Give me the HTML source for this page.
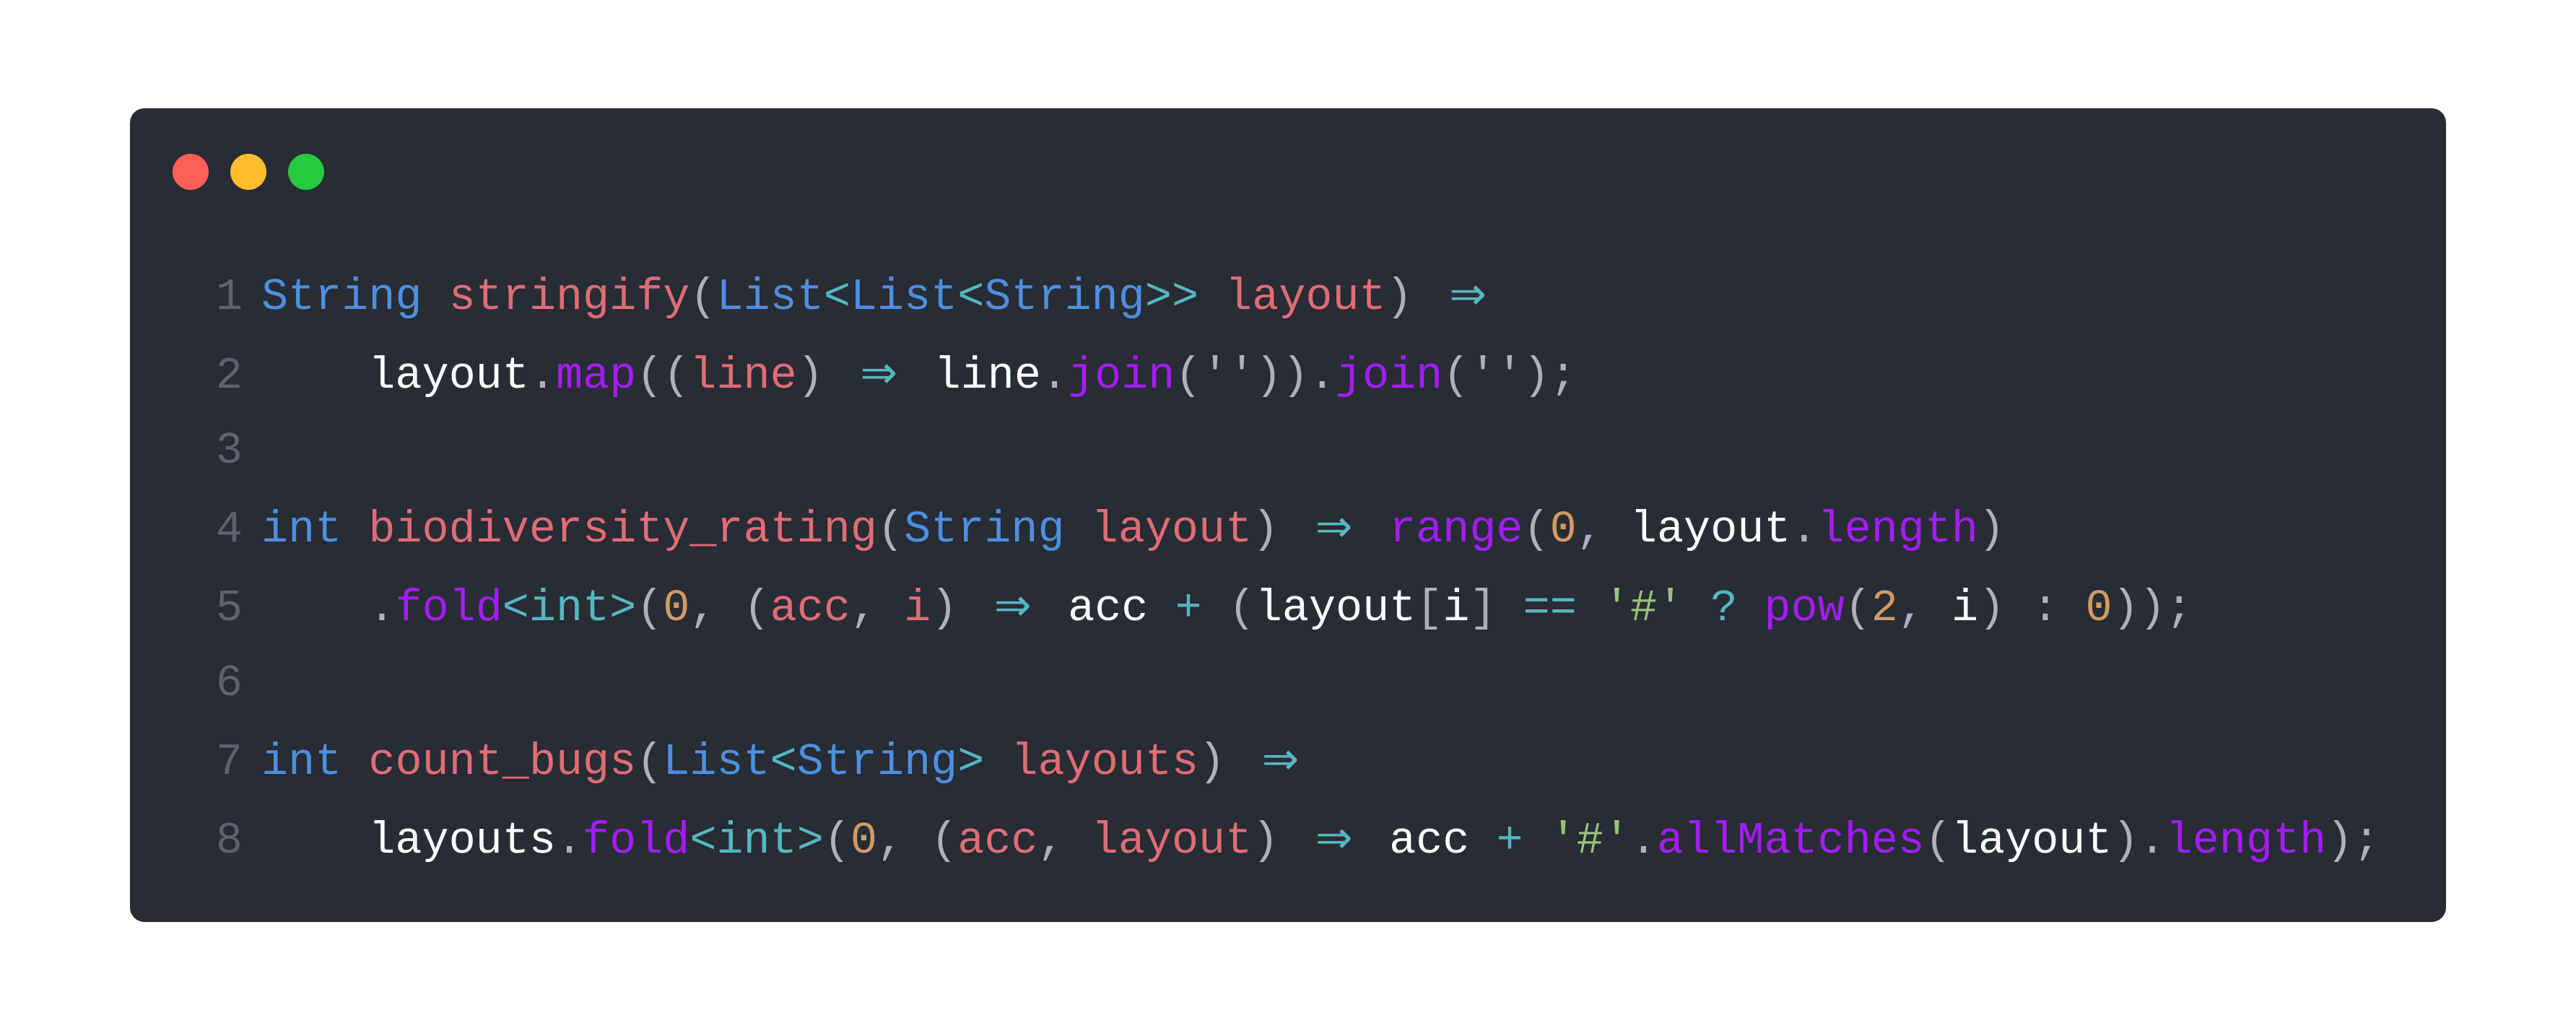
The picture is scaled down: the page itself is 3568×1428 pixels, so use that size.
<!DOCTYPE html>
<html><head><meta charset="utf-8"><style>
html,body{margin:0;padding:0;background:#fff;width:3568px;height:1428px;overflow:hidden}
.win{position:absolute;left:180px;top:150px;width:3208px;height:1127px;background:#282c34;border-radius:20px}
.dot{position:absolute;top:63px;width:50px;height:50px;border-radius:50%}
.code{position:absolute;left:0;top:205px;font-family:"Liberation Mono","DejaVu Sans Mono",monospace;font-size:61.8px;line-height:104px;white-space:pre;color:#fff}
.ln{display:inline-block;width:182px;text-align:right;color:#5c6370;padding-right:26px;box-sizing:border-box}
.b{color:#4d8fe0}.r{color:#e06c75}.g{color:#abb2bf}.c{color:#56b6c2}.p{color:#a31cf5}.o{color:#d19a66}.s{color:#98c379}
.ar{display:inline-block;width:2ch;text-align:center;color:#56b6c2;font-family:"DejaVu Sans",sans-serif}
.eq{display:inline-block;width:2ch;text-align:center;color:#56b6c2}
</style></head><body>
<div class="win">
<div class="dot" style="left:59px;background:#ff5f56"></div>
<div class="dot" style="left:139px;background:#ffbd2e"></div>
<div class="dot" style="left:219px;background:#27c93f"></div>
<div class="code"><div><span class="ln">1</span><span class="b">String</span> <span class="r">stringify</span><span class="g">(</span><span class="b">List</span><span class="c">&lt;</span><span class="b">List</span><span class="c">&lt;</span><span class="b">String</span><span class="c">&gt;&gt;</span> <span class="r">layout</span><span class="g">)</span> <span class="ar">⇒</span></div><div><span class="ln">2</span>    layout<span class="g">.</span><span class="p">map</span><span class="g">((</span><span class="r">line</span><span class="g">)</span> <span class="ar">⇒</span> line<span class="g">.</span><span class="p">join</span><span class="g">('')).</span><span class="p">join</span><span class="g">('');</span></div><div><span class="ln">3</span></div><div><span class="ln">4</span><span class="b">int</span> <span class="r">biodiversity_rating</span><span class="g">(</span><span class="b">String</span> <span class="r">layout</span><span class="g">)</span> <span class="ar">⇒</span> <span class="p">range</span><span class="g">(</span><span class="o">0</span><span class="g">,</span> layout<span class="g">.</span><span class="p">length</span><span class="g">)</span></div><div><span class="ln">5</span>    <span class="g">.</span><span class="p">fold</span><span class="c">&lt;int&gt;</span><span class="g">(</span><span class="o">0</span><span class="g">,</span> <span class="g">(</span><span class="r">acc</span><span class="g">,</span> <span class="r">i</span><span class="g">)</span> <span class="ar">⇒</span> acc <span class="c">+</span> <span class="g">(</span>layout<span class="g">[</span>i<span class="g">]</span> <span class="eq">==</span> <span class="s">'#'</span> <span class="c">?</span> <span class="p">pow</span><span class="g">(</span><span class="o">2</span><span class="g">,</span> i<span class="g">)</span> <span class="g">:</span> <span class="o">0</span><span class="g">));</span></div><div><span class="ln">6</span></div><div><span class="ln">7</span><span class="b">int</span> <span class="r">count_bugs</span><span class="g">(</span><span class="b">List</span><span class="c">&lt;</span><span class="b">String</span><span class="c">&gt;</span> <span class="r">layouts</span><span class="g">)</span> <span class="ar">⇒</span></div><div><span class="ln">8</span>    layouts<span class="g">.</span><span class="p">fold</span><span class="c">&lt;int&gt;</span><span class="g">(</span><span class="o">0</span><span class="g">,</span> <span class="g">(</span><span class="r">acc</span><span class="g">,</span> <span class="r">layout</span><span class="g">)</span> <span class="ar">⇒</span> acc <span class="c">+</span> <span class="s">'#'</span><span class="g">.</span><span class="p">allMatches</span><span class="g">(</span>layout<span class="g">).</span><span class="p">length</span><span class="g">);</span></div></div>
</div>
</body></html>
